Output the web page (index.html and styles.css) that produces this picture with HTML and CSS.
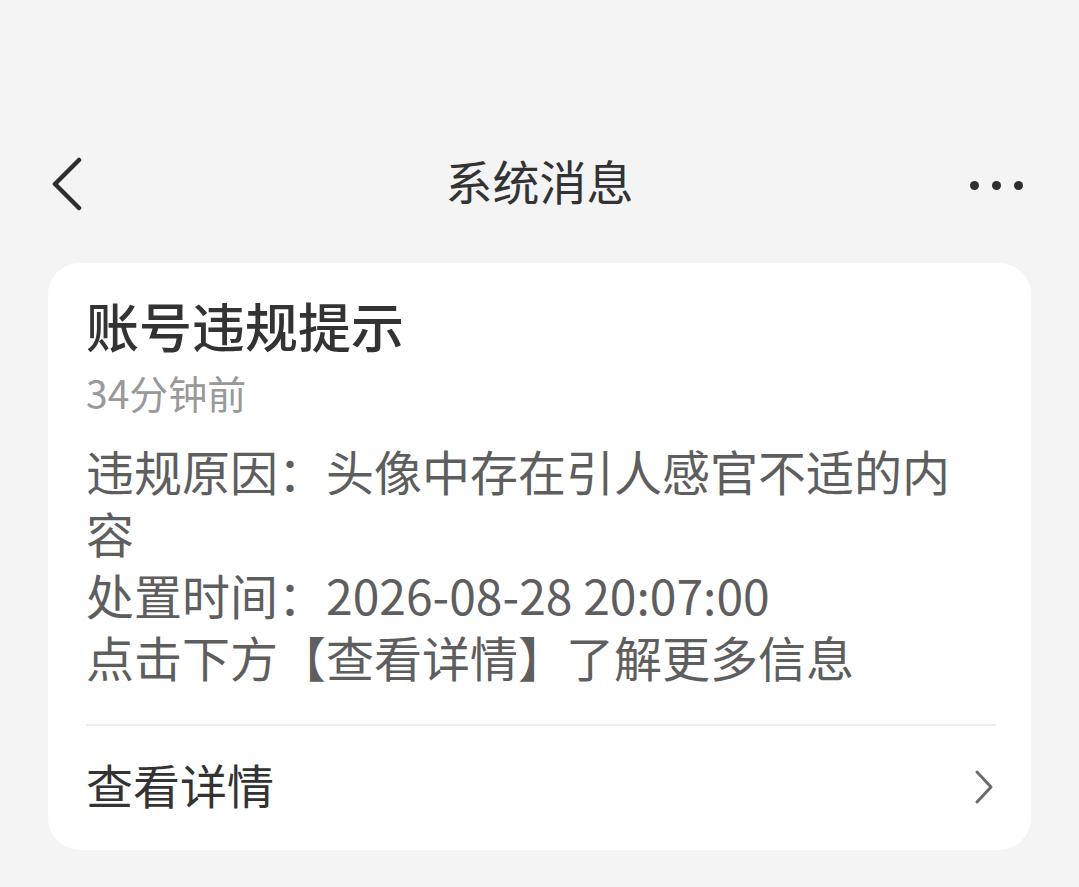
FILE: index.html
```html
<!DOCTYPE html>
<html lang="zh-CN">
<head>
<meta charset="utf-8">
<title>系统消息</title>
<link rel="stylesheet" href="styles.css">
</head>
<body>
<div class="page">
  <header class="nav">
    <div class="nav-left">
      <svg class="back" width="34" height="58" viewBox="0 0 34 58">
        <polyline points="27,4 3,28 27,52" fill="none" stroke="#2e2e2e" stroke-width="4.5" stroke-linecap="round" stroke-linejoin="round"/>
      </svg>
    </div>
    <h1 class="nav-title">系统消息</h1>
    <div class="nav-right">
      <span class="dot"></span><span class="dot"></span><span class="dot"></span>
    </div>
  </header>

  <section class="card">
    <h2 class="card-title">账号违规提示</h2>
    <div class="card-time">34分钟前</div>
    <div class="card-body">
      <p>违规原因：头像中存在引人感官不适的内容</p>
      <p>处置时间：2026-08-28 20:07:00</p>
      <p>点击下方【查看详情】了解更多信息</p>
    </div>
    <div class="divider"></div>
    <div class="card-action">
      <span class="action-label">查看详情</span>
      <svg class="arrow" width="22" height="38" viewBox="0 0 22 38">
        <polyline points="4,3 18,18 4,33" fill="none" stroke="#6b6b6b" stroke-width="3" stroke-linecap="round" stroke-linejoin="round"/>
      </svg>
    </div>
  </section>
</div>
</body>
</html>
```

FILE: styles.css
```css
html, body {
  margin: 0;
  padding: 0;
  background: #f4f4f4;
}
body {
  font-family: "Noto Sans CJK SC", "Noto Sans", sans-serif;
  width: 1079px;
  height: 887px;
  overflow: hidden;
}
.page {
  padding-top: 130px;
}
.nav {
  height: 110px;
  display: flex;
  align-items: center;
  justify-content: space-between;
  padding: 0 56px 0 52px;
  position: relative;
}
.nav-left, .nav-right {
  display: flex;
  align-items: center;
}
.back {
  display: block;
}
.nav-title {
  position: absolute;
  left: 0;
  right: 0;
  top: -5px;
  margin: 0;
  text-align: center;
  line-height: 110px;
  font-size: 47px;
  font-weight: 400;
  color: #333333;
  pointer-events: none;
}
.nav-right {
  gap: 13px;
}
.dot {
  width: 9px;
  height: 9px;
  border-radius: 50%;
  background: #2e2e2e;
}
.card {
  margin: 23px 48px 0 48px;
  background: #ffffff;
  border-radius: 32px;
  padding: 30px 35px 0 38px;
}
.card-title {
  margin: 0;
  font-size: 53px;
  line-height: 64px;
  font-weight: 500;
  color: #333333;
}
.card-time {
  margin-top: 6px;
  font-size: 39px;
  line-height: 58px;
  color: #999999;
}
.card-body {
  margin-top: 18px;
  font-size: 48px;
  line-height: 62px;
  color: #5e5e5e;
}
.card-body p {
  margin: 0;
}
.divider {
  margin-top: 37px;
  height: 2px;
  background: #ececec;
}
.card-action {
  height: 124px;
  display: flex;
  align-items: center;
  justify-content: space-between;
}
.action-label {
  font-size: 47px;
  line-height: 62px;
  margin-bottom: 8px;
  color: #333333;
}
.arrow {
  display: block;
  margin-right: 1px;
}
```
